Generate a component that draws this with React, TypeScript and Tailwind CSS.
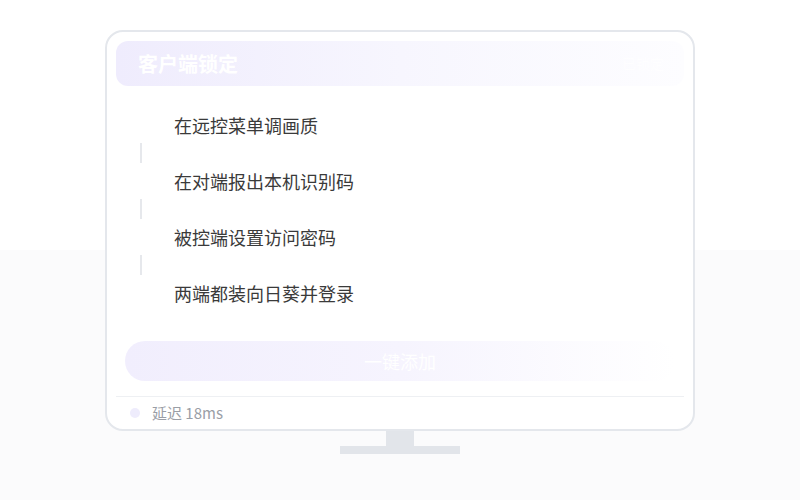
import React from "react";

const steps = [
  "在远控菜单调画质",
  "在对端报出本机识别码",
  "被控端设置访问密码",
  "两端都装向日葵并登录",
];

export default function App() {
  return (
    <div
      className="w-[800px] h-[500px] overflow-hidden bg-[linear-gradient(to_bottom,#ffffff_0%,#ffffff_50%,#fbfbfc_50%,#fbfbfc_100%)] pt-[30px]"
      style={{ fontFamily: '"Noto Sans CJK SC", "Noto Sans", sans-serif' }}
    >
      <div className="mx-auto w-[590px] h-[401px] rounded-[18px] border-2 border-[#e4e7ec] bg-white px-[9px] pt-[9px] flex flex-col">
        {/* 标题栏 */}
        <div className="h-[45px] shrink-0 rounded-[12px] bg-gradient-to-r from-[#efecfd] via-[#f7f6fe] to-[#fdfdff] pl-[22px] pr-[20px] flex items-center justify-between">
          <span className="text-[20px] font-bold text-white">客户端锁定</span>
          <span className="text-[14px] text-white/70">已锁定</span>
        </div>

        {/* 步骤 */}
        <div className="mt-[21px] flex flex-col">
          {steps.map((s, i) => (
            <React.Fragment key={s}>
              <div className="h-[36px] pl-[58px] flex items-center text-[18px] text-[#3a3a3a]">{s}</div>
              {i < steps.length - 1 && (
                <div className="ml-[24px] h-[20px] w-[2px] bg-[#e6e8ec]" />
              )}
            </React.Fragment>
          ))}
        </div>

        {/* 按钮 */}
        <button className="mt-[30px] mx-[9px] h-[40px] shrink-0 rounded-full bg-gradient-to-r from-[#f1eefd] via-[#f6f4fe] to-[#ffffff] text-[18px] text-white flex items-center justify-center">
          一键添加
        </button>

        <div className="mt-[15px] h-px bg-[#eef0f3]" />

        {/* 状态 */}
        <div className="h-[32px] pl-[14px] flex items-center gap-[12px]">
          <span className="w-[10px] h-[10px] rounded-full bg-[#eeecfc]" />
          <span className="text-[15px] text-[#9a9ea6]">延迟 18ms</span>
        </div>
      </div>

      {/* 支架 */}
      <div className="flex flex-col items-center">
        <div className="w-[28px] h-[15px] bg-[#e2e5ea]" />
        <div className="w-[120px] h-[8px] bg-[#e2e5ea]" />
      </div>
    </div>
  );
}
